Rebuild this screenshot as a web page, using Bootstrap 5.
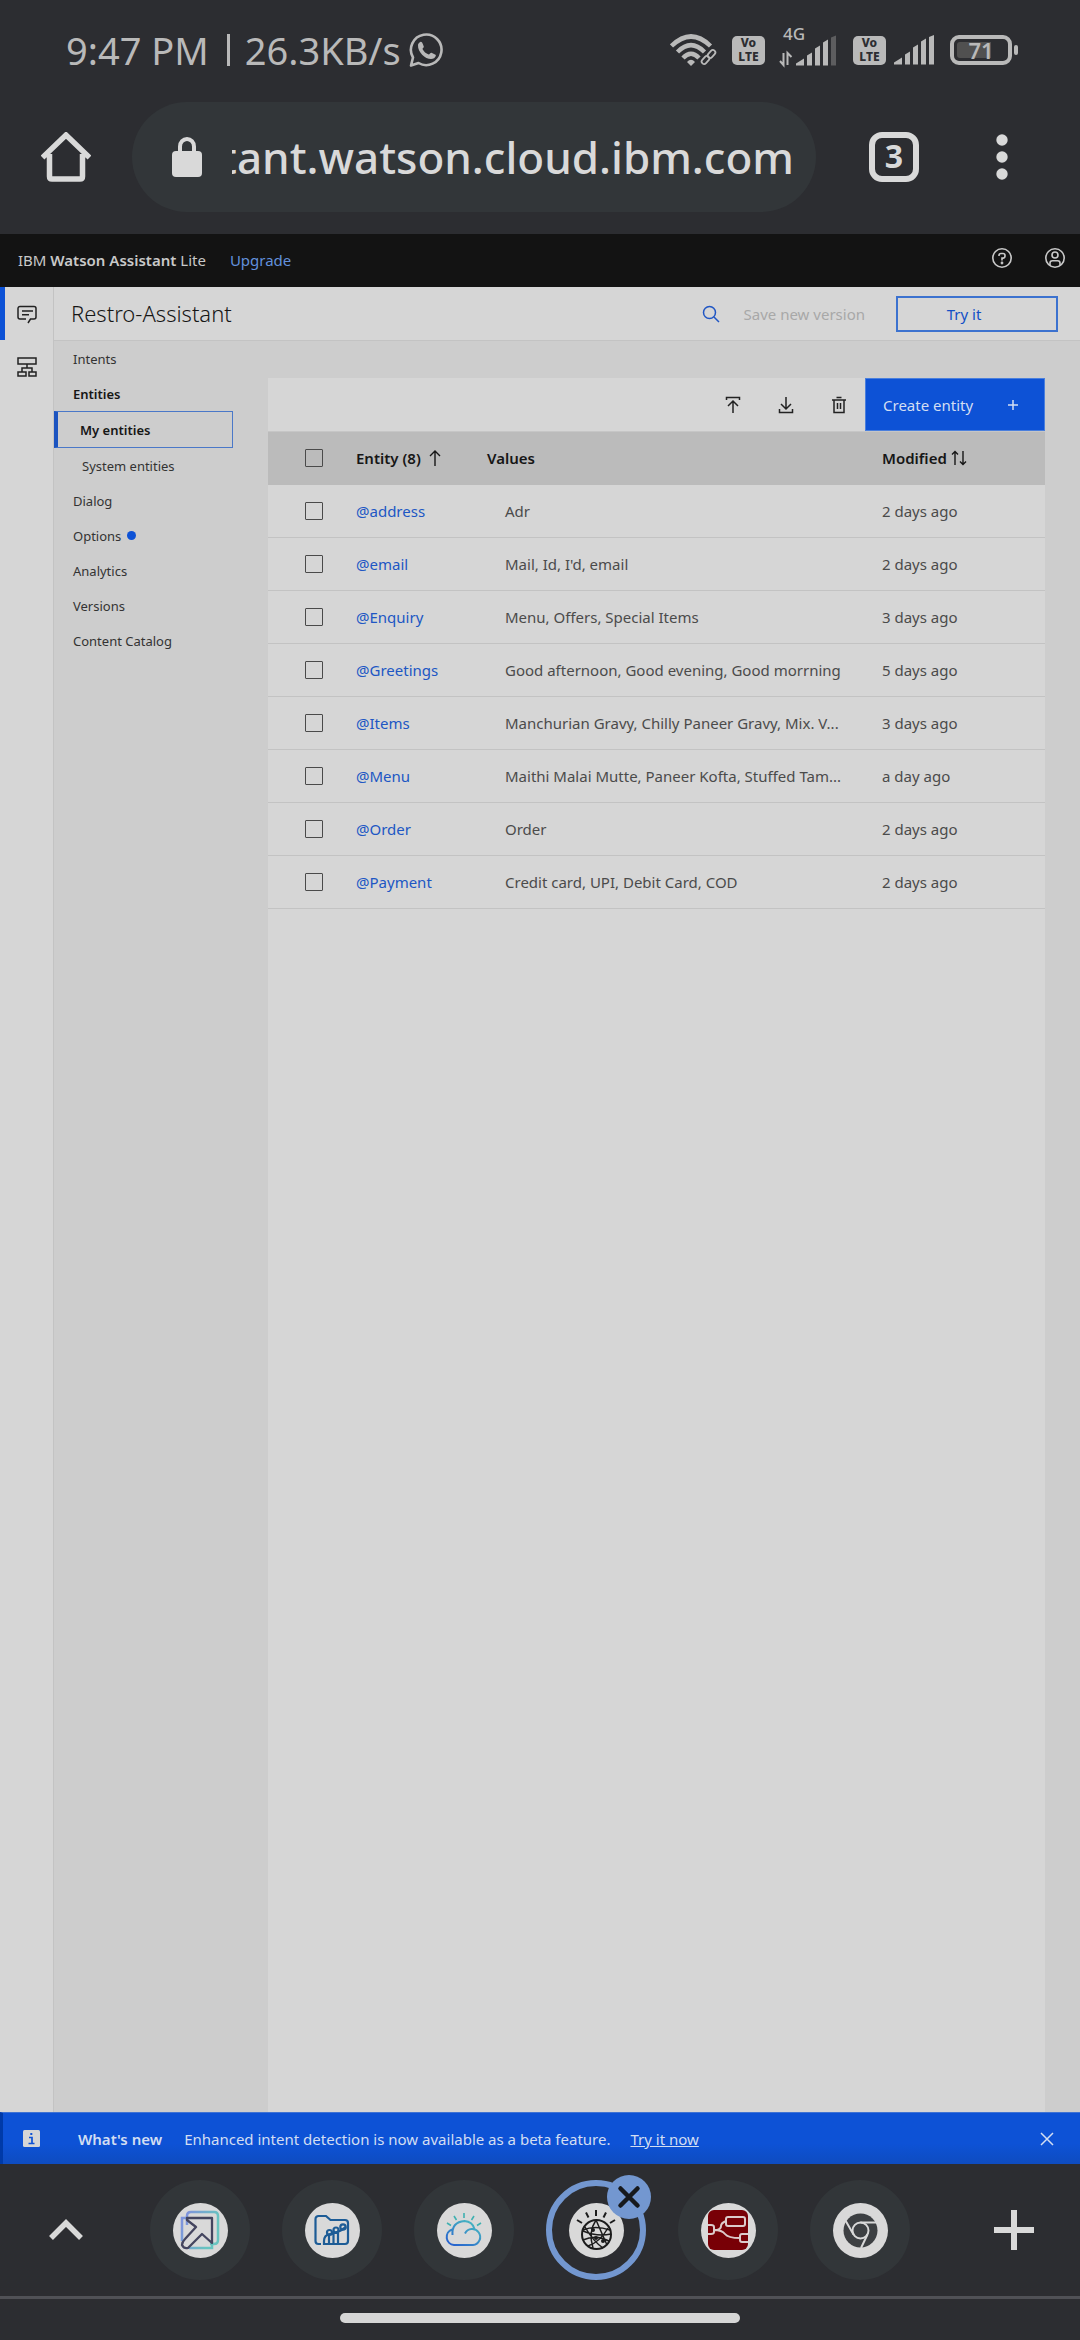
<!DOCTYPE html>
<html lang="en">
<head>
<meta charset="utf-8">
<meta name="viewport" content="width=device-width, initial-scale=1">
<title>Restro-Assistant - My entities</title>
<link rel="stylesheet" href="https://cdn.jsdelivr.net/npm/bootstrap@5.3.0/dist/css/bootstrap.min.css">
<style>
:root{--chrome:#2c2d31;--chrome-soft:#323639;--chrome-ink:#d9d9d9;--status-ink:#b9b9b9;--paper:#d6d6d6;--shade:#cdcdcd;--line:#c3c3c3;--ink:#161616;--blue:#0d52d6;--link:#2056c4;}
body{font-family:"Noto Sans",sans-serif;font-size:15px;line-height:20px;color:var(--ink);background:var(--paper);}
svg{display:block;flex:none;}
.btn{--bs-btn-padding-x:0;--bs-btn-padding-y:0;--bs-btn-border-radius:0;--bs-btn-font-size:15px;--bs-btn-line-height:20px;}
.ico{fill:none;stroke:currentColor;stroke-linecap:butt;}

.phone-chrome{background:var(--chrome);color:var(--chrome-ink);}
.status-bar{height:100px;padding:0 62px 0 66px;color:var(--status-ink);font-size:38px;line-height:40px;}
.status-sep{width:3px;height:32px;background:currentColor;margin:0 15px 0 18px;}
.volte{width:33px;height:29px;border-radius:5px;background:var(--status-ink);color:var(--chrome);font-size:12px;line-height:14px;font-weight:800;}
.wifi-icon{margin-right:14px;}
.network{font-size:17px;line-height:16px;font-weight:500;}
.network-block{margin-left:14px;}
.battery{width:62px;height:30px;border:4px solid var(--status-ink);border-radius:9px;padding:3px;font-size:22px;line-height:16px;font-weight:600;}
.battery-level{background:linear-gradient(90deg,#505050 71%,transparent 71%);border-radius:3px;width:100%;height:100%;}
.battery-nub{width:4px;height:10px;border-radius:2px;background:var(--status-ink);margin-left:2px;}
.address-row{height:134px;padding:2px 0 22px;}
.bar-btn{flex:none;width:132px;height:110px;color:var(--chrome-ink)!important;border:0;}
.omnibox{min-width:0;background:var(--chrome-soft);border-radius:55px;height:110px;padding:0 22px 0 40px;}
.omnibox input{width:0;direction:rtl;text-align:right;background:transparent;border:0;outline:0;color:var(--chrome-ink);font-size:44px;line-height:60px;font-weight:500;min-width:0;padding:0;margin-left:30px;}
.tab-count{width:50px;height:50px;border:6px solid var(--chrome-ink);border-radius:13px;font-size:32px;font-weight:700;line-height:36px;}

.ibm-bar{height:53px;background:#131313;color:#c9c9c9;padding:0 14px 2px 18px;}
.ibm-bar a{color:#6290dc;}
.ibm-bar .btn{color:#c9c9c9;}
.ibm-icons{gap:31px;}
.rail{flex:none;width:54px;border-right:1px solid var(--line);background:var(--paper);}
.rail a{height:53px;color:#222;}
.rail a.active{border-left:5px solid var(--blue);padding-right:5px;}
.title-bar{height:54px;border-bottom:1px solid var(--line);padding:0 22px 0 17px;}
.title-bar h1{font-size:22px;line-height:30px;font-weight:300;padding-bottom:2px;}
.search-btn{color:var(--link)!important;border:0;}
.save-btn{color:#a8a8a8!important;opacity:1!important;border:0;}
.try-btn{width:162px;height:36px;border:2px solid #3c72cf!important;color:#1350c6!important;padding-right:26px;margin-left:31px;}
.workspace{background:var(--shade);}
.side-nav{flex:none;width:214px;font-size:13px;line-height:20px;}
.side-nav a{height:35px;padding-left:19px;color:#333;text-decoration:none;display:flex;align-items:center;}
.side-nav a.open{font-weight:600;color:var(--ink);}
.side-nav a.sub-item{padding-left:28px;}
.side-nav a.current{height:37px;width:179px;padding-left:22px;border:1px solid #4a78c8;border-left:4px solid #1c54c0;font-weight:600;color:var(--ink);}
.news-dot{width:9px;height:9px;border-radius:50%;background:var(--blue);margin-left:6px;}
.panel{background:var(--paper);margin:37px 35px 0 0;min-width:0;}
.tool-row{height:53px;}
.tool-btn{width:53px;height:53px;color:#222!important;border:0;}
.create-btn{width:180px;height:53px;background:var(--blue)!important;color:#d3def2!important;border:1px solid #4a7fdd!important;padding:0 25px 0 17px;}
.entity-table{table-layout:fixed;width:100%;}
.entity-table th{background:#bbb;height:53px;font-weight:600;vertical-align:middle;padding:0;border-top:1px solid #c6c6c6;}
.entity-table td{height:53px;vertical-align:middle;padding:0 18px;border-bottom:1px solid var(--line);color:#4b4b4b;}
.entity-table .pick{width:70px;padding-left:37px;padding-right:0;}
.entity-table .name-col{width:149px;padding-left:18px;padding-right:0;}
.entity-table .date-col{width:181px;padding-left:18px;}
.entity-table td a{color:var(--link);text-decoration:none;}
.entity-table .form-check-input{width:18px;height:18px;border:1px solid #4a4a4a;border-radius:1px;background-color:transparent;margin:0;display:block;}
.notice{height:52px;background:linear-gradient(#0d52d6 60%,#0e4cc0);border-left:3px solid #003aa8;border-top:1px solid #3e73d4;color:#d3def2;padding:0 26px 0 20px;}
.notice a,.notice .btn{color:#d3def2;}
.notice-title{margin-left:38px;}
.notice-text{margin-left:22px;}
.notice-link{margin-left:20px;}

.tab-strip{height:132px;}
.tab-list{gap:32px;margin-left:18px;}
.tab-disc{width:100px;height:100px;border-radius:50%;background:var(--chrome-soft)!important;border:0;}
.tab-disc.current{background:transparent!important;border:6px solid #7397d0!important;}
.favicon-disc{flex:none;width:55px;height:55px;border-radius:50%;background:#d9d9d9;}
.close-tab{position:absolute;top:-5px;right:-5px;width:44px;height:44px;border-radius:50%;background:#7397d0!important;color:#17191c!important;border:0;}
.gesture-area{height:44px;border-top:3px solid #505156;padding-top:14px;}
.gesture-pill{width:37%;height:10px;border-radius:5px;background:#d6d6d6;}
</style>
<script src="https://cdn.jsdelivr.net/npm/bootstrap@5.3.0/dist/js/bootstrap.bundle.min.js"></script>
</head>
<body>
<div class="d-flex flex-column min-vh-100">

<header class="phone-chrome">
  <div class="status-bar d-flex align-items-center">
    <span>9:47 PM</span><span class="status-sep"></span><span>26.3KB/s</span>
    <svg class="ms-2" width="34" height="34" viewBox="0 0 34 34"><path d="M2 32.500 4 24.500A15.300 15.300 0 1 1 9.500 30Z" fill="none" stroke="currentColor" stroke-width="2.600" stroke-linejoin="round"/><path d="M11.300 9c1.800-1 2.700 2.700 3.500 4.400.3 1-1.600 2-1.300 2.700 1.300 2.700 3.500 4.500 6.200 5.400.7.200 1.900-2 2.800-1.700l4 2c1 .6-.5 2.900-1.500 3.500-5.900 3.200-16.500-5-16-13.400.1-1.200 1.200-2.300 2.300-2.900Z" fill="currentColor"/></svg>
    <div class="d-flex align-items-center ms-auto">
      <svg class="wifi-icon" width="48" height="32" viewBox="0 0 48 32"><g fill="none" stroke="currentColor" stroke-width="4.500"><path d="M1.500 12Q21 -7 40.500 12"/><path d="M7.500 18Q21 4.500 34.500 18"/><path d="M13 24Q21 15.500 29 24"/></g><path d="m21 32-4-4q4-4.500 8 0Z" fill="currentColor"/><g fill="none" stroke="#2c2d31" stroke-width="9"><path d="m34.500 28 10-11"/></g><g fill="none" stroke="currentColor" stroke-width="1.800"><rect x="31" y="23.500" width="9" height="5" rx="2.500" transform="rotate(-48 35.500 26)"/><rect x="37" y="17.500" width="9" height="5" rx="2.500" transform="rotate(-48 41.500 20)"/></g></svg>
      <div class="volte d-flex flex-column align-items-center justify-content-center"><span>Vo</span><span>LTE</span></div>
      <div class="network-block d-flex flex-column mb-2">
        <span class="network ms-1">4G</span>
        <svg width="58" height="24" viewBox="0 0 58 24" overflow="visible"><path d="M4.500 11v12L1 19M8.500 23V11l4 4" fill="none" stroke="currentColor" stroke-width="2"/><path d="M17 23.500v-2l8-5v7ZM28 23.500v-10l5-3v13ZM36 23.500V6.500l5-3v20ZM44 23.500V.5l5-3v26Z" fill="currentColor"/><path d="M52 23.500V-4.500l5-2v30Z" fill="#5d5d5f"/></svg>
      </div>
      <div class="volte d-flex flex-column align-items-center justify-content-center ms-3 me-2"><span>Vo</span><span>LTE</span></div>
      <svg width="40" height="30" viewBox="0 0 40 30"><path d="M0 29.500v-2l8-5v7ZM11 29.500v-10l5-3v13ZM19 29.500v-17l5-3v20ZM27 29.500v-23l5-3v26ZM35 29.500V2l5-2v29.500Z" fill="currentColor"/></svg>
      <div class="battery ms-3"><div class="battery-level d-flex align-items-center justify-content-center">71</div></div><span class="battery-nub"></span>
    </div>
  </div>
  <div class="address-row d-flex align-items-center">
    <button class="btn bar-btn d-flex align-items-center justify-content-center" type="button" aria-label="Home"><svg width="50" height="50" viewBox="0 0 50 50"><path d="M1.500 25.500 25 3 48.500 25.500M8.500 22v22.500q0 2.500 2.500 2.500h28q2.500 0 2.500-2.500V22" fill="none" stroke="currentColor" stroke-width="5.500"/></svg></button>
    <div class="omnibox d-flex align-items-center flex-grow-1">
      <svg width="30" height="40" viewBox="0 0 30 40"><path d="M8 15V9.500a7 7.500 0 0 1 14 0V15" fill="none" stroke="currentColor" stroke-width="4"/><rect y="14" width="30" height="26" rx="4" fill="currentColor"/></svg>
      <input class="flex-grow-1" type="text" aria-label="Address" value="us-south.assistant.watson.cloud.ibm.com">
    </div>
    <button class="btn bar-btn d-flex align-items-center justify-content-center ps-4" type="button" aria-label="Open tabs"><span class="tab-count">3</span></button>
    <button class="btn bar-btn d-flex align-items-center justify-content-center pe-4" type="button" aria-label="More"><svg width="12" height="46" viewBox="0 0 12 46" fill="currentColor"><circle cx="6" cy="6" r="5.700"/><circle cx="6" cy="23" r="5.700"/><circle cx="6" cy="40" r="5.700"/></svg></button>
  </div>
</header>

<div class="ibm-bar d-flex align-items-center">
  <span>IBM <b class="fw-semibold">Watson Assistant</b> Lite</span>
  <a class="text-decoration-none ms-4" href="#upgrade">Upgrade</a>
  <div class="ibm-icons d-flex ms-auto pb-1">
    <button class="btn border-0" type="button" aria-label="Help"><svg class="ico" width="22" height="22" viewBox="0 0 22 22" stroke-width="1.600"><circle cx="11" cy="11" r="9.200"/><path d="M8 9V8.500A2 2 0 0 1 10 6.500h2a2 2 0 0 1 2 2v.6a2 2 0 0 1-2 2h-1v2.400"/><circle cx="11" cy="16" r=".6"/></svg></button>
    <button class="btn border-0" type="button" aria-label="Account"><svg class="ico" width="22" height="22" viewBox="0 0 22 22" stroke-width="1.600"><circle cx="11" cy="11" r="9.200"/><circle cx="11" cy="8" r="3"/><path d="M6 18.500V16a2.300 2.300 0 0 1 2.300-2.300h5.400A2.300 2.300 0 0 1 16 16v2.500"/></svg></button>
  </div>
</div>

<div class="d-flex flex-grow-1">
  <nav class="rail" aria-label="Products">
    <a class="active d-flex align-items-center justify-content-center" href="#skills" aria-label="Skills"><svg class="ico" width="20" height="20" viewBox="0 0 20 20" stroke-width="1.500"><path d="M9 15H3a2 2 0 0 1-2-2V4.500a2 2 0 0 1 2-2h14a2 2 0 0 1 2 2V13a2 2 0 0 1-2 2h-3.500L11 19M5 7h11M5 10.800h7"/></svg></a>
    <a class="d-flex align-items-center justify-content-center" href="#assistants" aria-label="Assistants"><svg class="ico" width="20" height="20" viewBox="0 0 20 20" stroke-width="1.500"><path d="M1 1h18v6H1ZM10 7v4M5 15v-4h10v4M1 15h8v4H1ZM12 15h7v4h-7Z"/></svg></a>
  </nav>

  <div class="flex-grow-1 d-flex flex-column">
    <div class="title-bar d-flex align-items-center">
      <h1 class="mb-0">Restro-Assistant</h1>
      <button class="btn search-btn ms-auto" type="button" aria-label="Search"><svg class="ico" width="18" height="18" viewBox="0 0 18 18" stroke-width="1.500"><circle cx="7.500" cy="7.500" r="6"/><path d="m12 12 5 5"/></svg></button>
      <button class="btn save-btn ms-4" type="button" disabled>Save new version</button>
      <button class="btn try-btn" type="button">Try it</button>
    </div>

    <div class="workspace d-flex flex-grow-1">
      <nav class="side-nav" aria-label="Skill">
        <a href="#intents">Intents</a>
        <a class="open" href="#entities">Entities</a>
        <a class="current" href="#my">My entities</a>
        <a class="sub-item" href="#system">System entities</a>
        <a href="#dialog">Dialog</a>
        <a href="#options">Options<span class="news-dot"></span></a>
        <a href="#analytics">Analytics</a>
        <a href="#versions">Versions</a>
        <a href="#catalog">Content Catalog</a>
      </nav>

      <main class="panel flex-grow-1">
        <div class="tool-row d-flex justify-content-end">
          <button class="btn tool-btn d-flex align-items-center justify-content-center" type="button" aria-label="Import"><svg class="ico" width="16" height="18" viewBox="0 0 16 18" stroke-width="1.500"><path d="M1.500 4V1.500h13V4M8 17V5M3 10l5-5 5 5"/></svg></button>
          <button class="btn tool-btn d-flex align-items-center justify-content-center" type="button" aria-label="Export"><svg class="ico" width="16" height="18" viewBox="0 0 16 18" stroke-width="1.500"><path d="M1.500 13v3.500h13V13M8 1v12M3 8l5 5 5-5"/></svg></button>
          <button class="btn tool-btn d-flex align-items-center justify-content-center" type="button" aria-label="Delete"><svg class="ico" width="16" height="18" viewBox="0 0 16 18" stroke-width="1.500"><path d="M1 4h14M5.500 1.500h5M3 4v12.500h10V4M6.500 7v6M9.500 7v6"/></svg></button>
          <button class="btn create-btn d-flex align-items-center justify-content-between" type="button">Create entity<svg class="ico" width="12" height="12" viewBox="0 0 12 12" stroke-width="1.500"><path d="M6 1v10M1 6h10"/></svg></button>
        </div>
        <table class="entity-table">
          <thead><tr>
            <th class="pick"><input class="form-check-input" type="checkbox" aria-label="Select all"></th>
            <th class="name-col"><span class="d-flex align-items-center">Entity (8)<svg class="ico ms-2" width="12" height="17" viewBox="0 0 12 17" stroke-width="1.400"><path d="M6 16V1M1 6l5-5 5 5"/></svg></span></th>
            <th>Values</th>
            <th class="date-col"><span class="d-flex align-items-center">Modified<svg class="ico ms-1" width="16" height="16" viewBox="0 0 16 16" stroke-width="1.400"><path d="M4 15V1.500M1 4.500l3-3 3 3M12 1v13.500M9 11.500l3 3 3-3"/></svg></span></th>
          </tr></thead>
          <tbody>
            <tr><td class="pick"><input class="form-check-input" type="checkbox" aria-label="Select address"></td><td class="name-col"><a href="#address">@address</a></td><td class="text-truncate">Adr</td><td class="date-col">2 days ago</td></tr>
            <tr><td class="pick"><input class="form-check-input" type="checkbox" aria-label="Select email"></td><td class="name-col"><a href="#email">@email</a></td><td class="text-truncate">Mail, Id, I'd, email</td><td class="date-col">2 days ago</td></tr>
            <tr><td class="pick"><input class="form-check-input" type="checkbox" aria-label="Select Enquiry"></td><td class="name-col"><a href="#enquiry">@Enquiry</a></td><td class="text-truncate">Menu, Offers, Special Items</td><td class="date-col">3 days ago</td></tr>
            <tr><td class="pick"><input class="form-check-input" type="checkbox" aria-label="Select Greetings"></td><td class="name-col"><a href="#greetings">@Greetings</a></td><td class="text-truncate">Good afternoon, Good evening, Good morrning</td><td class="date-col">5 days ago</td></tr>
            <tr><td class="pick"><input class="form-check-input" type="checkbox" aria-label="Select Items"></td><td class="name-col"><a href="#items">@Items</a></td><td class="text-truncate">Manchurian Gravy, Chilly Paneer Gravy, Mix. V...</td><td class="date-col">3 days ago</td></tr>
            <tr><td class="pick"><input class="form-check-input" type="checkbox" aria-label="Select Menu"></td><td class="name-col"><a href="#menu">@Menu</a></td><td class="text-truncate">Maithi Malai Mutte, Paneer Kofta, Stuffed Tam...</td><td class="date-col">a day ago</td></tr>
            <tr><td class="pick"><input class="form-check-input" type="checkbox" aria-label="Select Order"></td><td class="name-col"><a href="#order">@Order</a></td><td class="text-truncate">Order</td><td class="date-col">2 days ago</td></tr>
            <tr><td class="pick"><input class="form-check-input" type="checkbox" aria-label="Select Payment"></td><td class="name-col"><a href="#payment">@Payment</a></td><td class="text-truncate">Credit card, UPI, Debit Card, COD</td><td class="date-col">2 days ago</td></tr>
          </tbody>
        </table>
      </main>
    </div>
  </div>
</div>

<div class="notice d-flex align-items-center" role="status">
  <svg width="17" height="17" viewBox="0 0 17 17"><rect width="17" height="17" rx="1.500" fill="#d6d6d6"/><path d="M6 7.500h3v5.500M5.500 13.500h6" fill="none" stroke="#0d52d6" stroke-width="1.700"/><rect x="7.300" y="3" width="2" height="2" fill="#0d52d6"/></svg>
  <b class="notice-title fw-semibold">What's new</b>
  <span class="notice-text">Enhanced intent detection is now available as a beta feature.</span>
  <a class="notice-link" href="#try">Try it now</a>
  <button class="btn border-0 ms-auto" type="button" aria-label="Dismiss"><svg class="ico" width="14" height="14" viewBox="0 0 14 14" stroke-width="1.500"><path d="m1 1 12 12M13 1 1 13"/></svg></button>
</div>

<footer class="phone-chrome">
  <div class="tab-strip d-flex align-items-center">
    <button class="btn bar-btn d-flex align-items-center justify-content-center" type="button" aria-label="Expand tabs"><svg width="34" height="22" viewBox="0 0 34 22"><path d="m2 19 15-15 15 15" fill="none" stroke="currentColor" stroke-width="5.500"/></svg></button>
    <div class="tab-list d-flex">
      <button class="btn tab-disc d-flex align-items-center justify-content-center" type="button" aria-label="Tab 1"><span class="favicon-disc d-flex align-items-center justify-content-center"><svg width="40" height="40" viewBox="0 0 40 40" fill="none"><defs><linearGradient id="launch" x2="1" y2=".3"><stop stop-color="#7f93dd"/><stop offset="1" stop-color="#68c4c0"/></linearGradient></defs><path d="M7 15V6q0-4 4-4h23q4 0 4 4v24q0 4-4 4h-4" stroke="url(#launch)" stroke-width="2.500"/><path d="M2 31V8h6M9 38h23v-6" stroke="url(#launch)" stroke-width="2.500"/><path d="M7 8h25v25L22 24 8 38q-4 1-6-3 0-3 3-6L16 17 7 10Z" stroke="#44455f" stroke-width="2.300" stroke-linejoin="round"/></svg></span></button>
      <button class="btn tab-disc d-flex align-items-center justify-content-center" type="button" aria-label="Tab 2"><span class="favicon-disc d-flex align-items-center justify-content-center"><svg width="36" height="32" viewBox="0 0 36 32" fill="none" stroke="#1d5c96" stroke-width="2.200"><path d="M7 30H4.500A3 3 0 0 1 1.500 27V5A3 3 0 0 1 4.500 2H12l4.500 4H31a3 3 0 0 1 3 3v18a3 3 0 0 1-3 3H10v-3q0-6 6-7 8-1 16-7M15 30V21M19.500 30V20M24 30V18"/><circle cx="15.500" cy="18.500" r="2.500"/><circle cx="22" cy="16" r="2.500"/><circle cx="29" cy="13" r="2.700"/></svg></span></button>
      <button class="btn tab-disc d-flex align-items-center justify-content-center" type="button" aria-label="Tab 3"><span class="favicon-disc d-flex align-items-center justify-content-center"><svg width="38" height="38" viewBox="0 0 38 38" fill="none"><defs><linearGradient id="cloud" x1="0" y1="1" x2=".8" y2="0"><stop stop-color="#245bd0"/><stop offset="1" stop-color="#49b9c0"/></linearGradient></defs><path d="M7 18.500a8 8 0 0 0 2 15.500h19a8 8 0 1 0-8-11.500M7.500 24q-1-13 12-14 8 .5 10 8" stroke="url(#cloud)" stroke-width="2"/><path d="m2 12 4 2.500M9 5l2.500 4M19 2v5M29 5l-2.500 4M36 12l-4 2.500" stroke="#3fb0b0" stroke-width="1.600"/></svg></span></button>
      <div class="position-relative">
        <button class="btn tab-disc current d-flex align-items-center justify-content-center" type="button" aria-label="Current tab"><span class="favicon-disc d-flex align-items-center justify-content-center"><svg width="40" height="40" viewBox="0 0 40 40" fill="none" stroke="#1c1c1c" stroke-width="1.500"><circle cx="20.500" cy="24.500" r="14.500" stroke-width="2"/><path d="M7 20q12-5 27 0M7 30q13-6 26 1M20 10q-8 12-3 28M20 10l11 25M7 21q14 6 28 3M12 36q12-4 20-18M9 17q8 14 18 21"/><path d="M20 0v6M10 2.500l2.500 5M30 2.500l-2.500 5M1 10l5 3M39 10l-5 3" stroke-width="2"/><g fill="#1c1c1c" stroke="none"><circle cx="17" cy="20" r="2"/><circle cx="20" cy="28" r="2"/><circle cx="27" cy="31" r="2"/></g></svg></span></button>
        <button class="btn close-tab d-flex align-items-center justify-content-center" type="button" aria-label="Close tab"><svg width="24" height="24" viewBox="0 0 24 24"><path d="m3.500 3.500 17 17M20.500 3.500l-17 17" stroke="currentColor" stroke-width="4.500" stroke-linecap="round"/></svg></button>
      </div>
      <button class="btn tab-disc d-flex align-items-center justify-content-center" type="button" aria-label="Tab 5"><span class="favicon-disc d-flex align-items-center justify-content-center"><svg width="40" height="40" viewBox="0 0 40 40" fill="none"><rect width="40" height="40" rx="6" fill="#780006"/><g stroke="#dccaca" stroke-width="2"><rect x="18" y="7" width="19" height="9" rx="2"/><path d="M0 15h3q3 0 3 2v5q0 2-3 2H0M40 24h-6q-2 0-2 2v4q0 2 2 2h6M6 20h3q4-1 4-4t5-5M6 20q8 0 11 4t15 4"/></g></svg></span></button>
      <button class="btn tab-disc d-flex align-items-center justify-content-center" type="button" aria-label="Tab 6"><span class="favicon-disc d-flex align-items-center justify-content-center"><svg width="35" height="35" viewBox="0 0 35 35"><circle cx="17.500" cy="17.500" r="17" fill="#3d4043"/><g fill="none" stroke="#d9d9d9" stroke-width="2"><circle cx="17.500" cy="17.500" r="8"/><path d="M17.500 9.500H34M10.500 21.500 2.500 7.500M24.500 21.500 18 35"/></g></svg></span></button>
    </div>
    <button class="btn bar-btn d-flex align-items-center justify-content-center ms-auto" type="button" aria-label="New tab"><svg width="40" height="40" viewBox="0 0 40 40"><path d="M20 0v40M0 20h40" stroke="currentColor" stroke-width="6"/></svg></button>
  </div>
  <div class="gesture-area"><div class="gesture-pill mx-auto"></div></div>
</footer>
</div>
</body>
</html>
